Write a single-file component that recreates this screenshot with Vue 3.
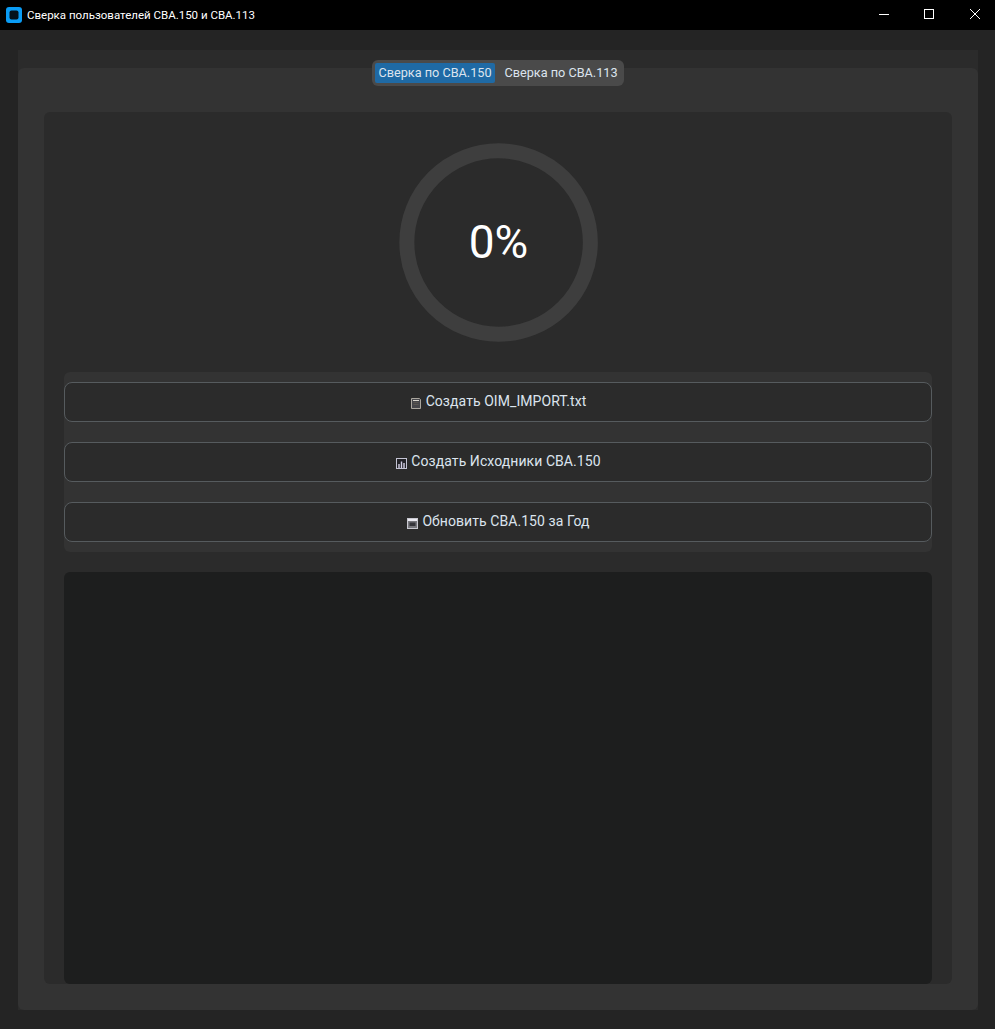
<script setup>
const tabs = [
  { label: 'Сверка по СВА.150', active: true },
  { label: 'Сверка по СВА.113', active: false },
]
const actions = [
  { label: 'Создать OIM_IMPORT.txt', icon: 'doc' },
  { label: 'Создать Исходники СВА.150', icon: 'chart' },
  { label: 'Обновить СВА.150 за Год', icon: 'cal' },
]
</script>

<template>
  <div class="window">
    <header class="titlebar">
      <svg class="logo" width="16" height="16" viewBox="0 0 16 16">
        <rect width="16" height="16" rx="3" fill="#0a9cf5" />
        <rect x="3.5" y="3.5" width="9" height="9" rx="2" fill="#04121d" />
      </svg>
      <span class="title">Сверка пользователей СВА.150 и СВА.113</span>
      <div class="controls">
        <svg class="ctl" width="46" height="30" viewBox="0 0 46 30">
          <path d="M22 14.5h10" stroke="#fff" fill="none" />
        </svg>
        <svg class="ctl" width="46" height="30" viewBox="0 0 46 30">
          <rect x="21.5" y="9.5" width="9" height="9" stroke="#fff" fill="none" />
        </svg>
        <svg class="ctl" width="46" height="30" viewBox="0 0 46 30">
          <path d="M21 9l10 10M31 9L21 19" stroke="#fff" fill="none" />
        </svg>
      </div>
    </header>

    <main class="content">
      <section class="tabview">
        <div class="segmented">
          <button v-for="t in tabs" :key="t.label" class="seg" :class="{ active: t.active }">{{ t.label }}</button>
        </div>
        <div class="tabpanel">
          <div class="card">
            <div class="ring">
              <svg width="200" height="200" viewBox="0 0 200 200">
                <circle cx="100.6" cy="100.5" r="91.75" fill="none" stroke="#3e3e3e" stroke-width="15" />
              </svg>
              <span class="percent">0%</span>
            </div>
            <div class="actions">
              <button v-for="a in actions" :key="a.label" class="action">
                <svg class="icon" width="11" height="12" viewBox="0 0 11 12">
                  <template v-if="a.icon === 'doc'">
                    <path d="M0.5 1.5h8l1 1v9h-9z" fill="#46464a" stroke="#aaa69e" />
                    <path d="M2 3.5h6" stroke="#d8d4cc" />
                    <path d="M2.5 5.5h5M2.5 7.5h5" stroke="#5a5650" />
                  </template>
                  <template v-else-if="a.icon === 'chart'">
                    <rect x="0.5" y="1.5" width="10" height="10" fill="#232328" stroke="#c4c4d4" />
                    <path d="M3 11V7M5.5 11V4.5M8 11V6" stroke="#d4d0e6" stroke-width="1.4" />
                  </template>
                  <template v-else>
                    <rect x="0.5" y="1.5" width="10" height="10" fill="#77777c" stroke="#c8c8d0" />
                    <path d="M1 3h9" stroke="#ecebf2" stroke-width="2" />
                    <rect x="2.5" y="5.5" width="6" height="3.5" fill="#35353a" />
                  </template>
                </svg>
                <span class="action-label">{{ a.label }}</span>
              </button>
            </div>
            <div class="log"></div>
          </div>
        </div>
      </section>
    </main>
  </div>
</template>

<style>
html, body { margin: 0; background: #242424; }
</style>

<style scoped>
.window {
  width: 995px;
  height: 1029px;
  display: flex;
  flex-direction: column;
  background: #242424;
  overflow: hidden;
}
.titlebar {
  height: 30px;
  flex: none;
  background: #000;
  display: flex;
  align-items: center;
  padding-left: 6px;
  color: #fff;
}
.logo { flex: none; }
.title {
  margin-left: 5px;
  font: 11.5px Roboto, sans-serif;
  white-space: nowrap;
}
.controls {
  margin-left: auto;
  display: flex;
}
.ctl { display: block; }
.content {
  flex: 1;
  padding: 20px 17px 19px 18px;
  display: flex;
  min-height: 0;
}
.tabview {
  position: relative;
  flex: 1;
  padding-top: 18px;
  display: flex;
  background: #2b2b2b;
}
.segmented {
  position: absolute;
  top: 10px;
  left: 354px;
  width: 252px;
  height: 26px;
  box-sizing: border-box;
  padding: 3px;
  display: flex;
  gap: 6px;
  background: #4a4a4a;
  border-radius: 6px;
  z-index: 1;
}
.seg {
  flex: none;
  border: 0;
  width: 120px;
  padding: 0 0 2px;
  height: 20px;
  background: transparent;
  color: #dce4ee;
  font: 12.7px Roboto, sans-serif;
  white-space: nowrap;
  border-radius: 2px;
}
.seg.active { background: #1f6aa5; }
.tabpanel {
  flex: 1;
  padding: 44px 26px 26px;
  display: flex;
  background: #333;
  border-radius: 6px;
}
.card {
  flex: 1;
  background: #2b2b2b;
  border-radius: 6px;
  padding: 30px 20px 0;
  display: flex;
  flex-direction: column;
}
.ring {
  position: relative;
  width: 200px;
  height: 200px;
  margin: 0 auto;
  flex: none;
  display: flex;
  align-items: center;
  justify-content: center;
}
.ring svg { position: absolute; inset: 0; }
.percent {
  position: relative;
  padding-left: 1px;
  font: 46px Roboto, sans-serif;
  color: #fff;
}
.actions {
  margin-top: 30px;
  padding: 10px 0;
  display: flex;
  flex-direction: column;
  gap: 20px;
  background: #333;
  border-radius: 6px;
  flex: none;
}
.action {
  height: 40px;
  box-sizing: border-box;
  border: 1px solid #565b5e;
  border-radius: 8px;
  background: #2b2b2b;
  color: #dce4ee;
  font: 14px Roboto, sans-serif;
  letter-spacing: 0.07px;
  display: flex;
  align-items: center;
  justify-content: center;
  gap: 4px;
  padding: 0 0 0 1px;
}
.action-label { margin-bottom: 2px; }
.icon { flex: none; margin-top: 2px; }
.log {
  margin-top: 20px;
  flex: 1;
  background: #1d1e1e;
  border-radius: 6px;
}
</style>
